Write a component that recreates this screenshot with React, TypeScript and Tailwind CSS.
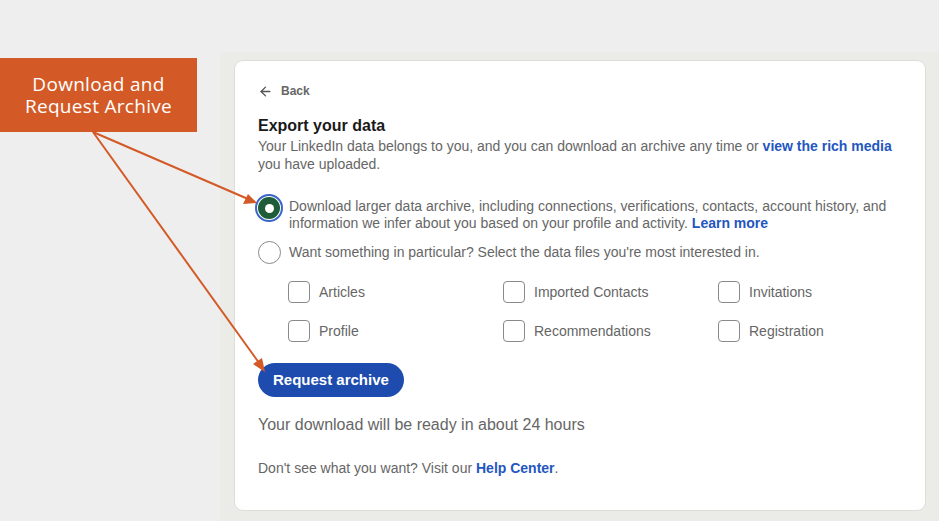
import { ArrowLeft } from "lucide-react";

const files = [
    ["Articles", "Imported Contacts", "Invitations"],
    ["Profile", "Recommendations", "Registration"],
];

function Checkbox({ label }: { label: string }) {
    return (
        <label className="flex items-center gap-[9px]">
            <span className="w-[22px] h-[22px] rounded-[4px] border border-[#8a8a8a] bg-white" />
            <span className="text-[14px] text-[#666666]">{label}</span>
        </label>
    );
}

export default function App() {
    return (
        <main className="relative w-[939px] h-[521px] overflow-hidden bg-[#eeeeee] pt-[52px] pl-[220px] font-['Liberation_Sans',Arial,sans-serif]">
            <div className="h-full bg-[#ebebe7] pt-[9px] pl-[15px]">
                <section className="w-[690px] h-[449px] rounded-[8px] bg-white pl-[23px] pt-[22px] shadow-[0_0_0_1px_rgba(0,0,0,0.06)]">
                    {/* back link */}
                    <button className="flex items-center gap-[8px] h-[16px] text-[12px] font-bold text-[#666666]">
                        <ArrowLeft size={15} strokeWidth={2.2} className="text-[#555555]" />
                        Back
                    </button>

                    <h1 className="mt-[17px] text-[16px] leading-[20px] font-bold text-[#1a1a1a]">Export your data</h1>
                    <p className="mt-[1px] w-[640px] text-[14px] leading-[18px] text-[#666666]">
                        Your LinkedIn data belongs to you, and you can download an archive any time or{" "}
                        <a className="font-bold text-[#2356bf]">view the rich media</a> you have uploaded.
                    </p>

                    {/* options */}
                    <div className="mt-[25px] flex items-start gap-[6px] -ml-[3px]">
                        <span className="mt-[-4px] w-[28px] h-[28px] shrink-0 rounded-full border-[2px] border-[#3a66c6] flex items-center justify-center">
                            <span className="w-[22px] h-[22px] rounded-full bg-[#1f5c38] flex items-center justify-center">
                                <span className="w-[9px] h-[9px] rounded-full bg-white" />
                            </span>
                        </span>
                        <p className="w-[610px] text-[14px] leading-[17px] text-[#666666]">
                            Download larger data archive, including connections, verifications, contacts, account history, and information we infer about you based on your profile and activity.{" "}
                            <a className="font-bold text-[#2356bf]">Learn more</a>
                        </p>
                    </div>

                    <div className="mt-[9px] flex items-center gap-[8px]">
                        <span className="w-[23px] h-[23px] rounded-full border border-[#8a8a8a]" />
                        <span className="text-[14px] text-[#666666]">
                            Want something in particular? Select the data files you're most interested in.
                        </span>
                    </div>

                    <div className="mt-[17px] ml-[30px] grid grid-cols-[215px_215px_auto] gap-y-[17px]">
                        {files.flat().map((f) => (
                            <Checkbox key={f} label={f} />
                        ))}
                    </div>

                    <button className="mt-[21px] h-[34px] px-[15px] rounded-full bg-[#1d4cae] text-white text-[15px] font-bold">
                        Request archive
                    </button>

                    <p className="mt-[18px] text-[16px] leading-[20px] text-[#666666]">Your download will be ready in about 24 hours</p>

                    <p className="mt-[24px] text-[14px] leading-[18px] text-[#666666]">
                        Don't see what you want? Visit our <a className="font-bold text-[#2356bf]">Help Center</a>.
                    </p>
                </section>
            </div>

            {/* annotation */}
            <div className="absolute left-0 top-[58px] w-[197px] h-[74px] bg-[#d35a26] flex flex-col items-center justify-center text-white text-[19px] leading-[22px] font-['Open_Sans',sans-serif] tracking-[0.3px]">
                <span>Download and</span>
                <span>Request Archive</span>
            </div>
            <svg className="absolute inset-0 pointer-events-none" width="939" height="521" viewBox="0 0 939 521">
                <line x1="93" y1="132" x2="255" y2="202" stroke="#d35a26" strokeWidth="2" />
                <path d="M257 203 L243 204 L248 194 Z" fill="#d35a26" />
                <line x1="93" y1="132" x2="262" y2="367" stroke="#d35a26" strokeWidth="2" />
                <path d="M265 372 L253 364 L262 358 Z" fill="#d35a26" />
            </svg>
        </main>
    );
}
